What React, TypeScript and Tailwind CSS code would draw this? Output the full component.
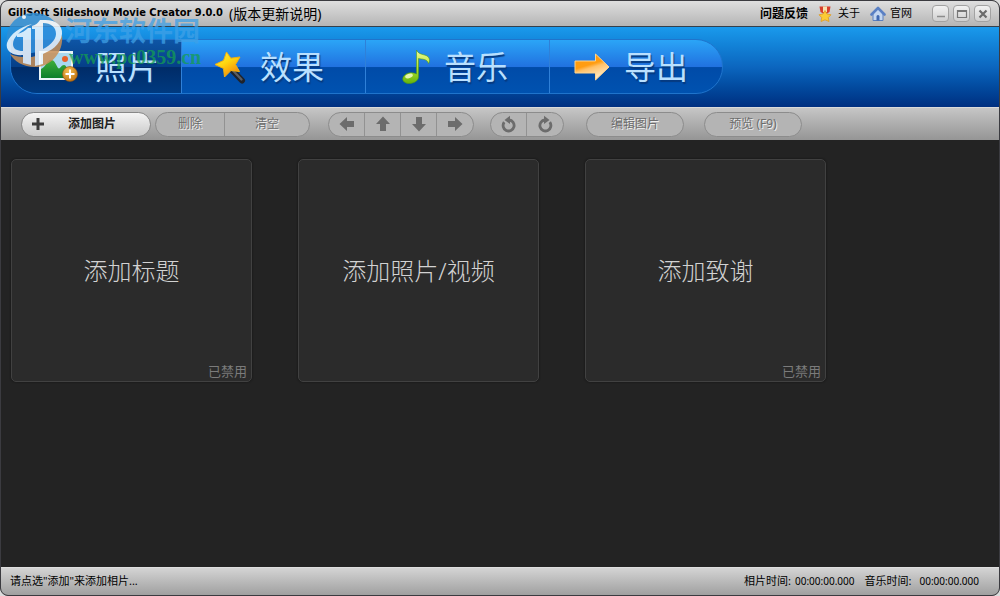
import type { ReactNode } from "react";
import { clsx } from "clsx";

const PhotoIcon = () => (
  <svg viewBox="0 0 40 32" className="h-8 w-10" aria-hidden="true">
    <defs>
      <linearGradient id="hill" x1="0" y1="0" x2="0" y2="1">
        <stop offset="0" stopColor="#3fae3c" />
        <stop offset="1" stopColor="#0b7f2c" />
      </linearGradient>
      <radialGradient id="plus" cx=".4" cy=".3" r=".8">
        <stop offset="0" stopColor="#f6c052" />
        <stop offset="1" stopColor="#b96a0c" />
      </radialGradient>
    </defs>
    <rect x="0" y="0" width="34" height="29" fill="#e9f4f8" />
    <rect x="2" y="2" width="30" height="25" fill="#a9d8f0" />
    <circle cx="26" cy="8" r="3" fill="#e8612a" />
    <path d="M2 27V18C7 16 8 9 12 9C16 9 17 14 19 17C21 19 22 14 25 14C28 14 28 20 32 21V27Z" fill="url(#hill)" />
    <circle cx="31" cy="23" r="7.5" fill="url(#plus)" stroke="#8d5312" strokeWidth=".6" />
    <path d="M31 18.5V27.5M26.500 23H35.500" stroke="#fff" strokeWidth="2" />
  </svg>
);

const WandIcon = () => (
  <svg viewBox="0 0 32 34" className="h-9 w-8" aria-hidden="true">
    <defs>
      <linearGradient id="star" x1="0" y1="0" x2=".6" y2="1">
        <stop offset="0" stopColor="#fff04a" />
        <stop offset=".5" stopColor="#ffd70f" />
        <stop offset="1" stopColor="#f58a0a" />
      </linearGradient>
    </defs>
    <path d="M18 20L28 30.500" stroke="#1f232b" strokeWidth="6" strokeLinecap="round" />
    <path d="M18.500 20L27.500 29.500" stroke="#585d64" strokeWidth="2.400" strokeLinecap="round" />
    <path d="M12.500 2L16.800 8.200L26 7L21.500 14.500L25.500 21.500L17 20.500L10.500 27L9.500 18.500L1 14.500L9.500 10.500Z" fill="url(#star)" stroke="#f0b010" strokeWidth="1" strokeLinejoin="round" />
  </svg>
);

const NoteIcon = () => (
  <svg viewBox="0 0 30 36" className="h-9 w-8" aria-hidden="true">
    <defs>
      <linearGradient id="note" x1="0" y1="0" x2="0" y2="1">
        <stop offset="0" stopColor="#f0fb9c" />
        <stop offset=".5" stopColor="#b9e532" />
        <stop offset="1" stopColor="#64b40c" />
      </linearGradient>
    </defs>
    <path d="M15.500 1C18 7 26 4.500 28 9C29 11 28.500 13 27.500 14.500C26 9.500 21 10.500 17.500 9.500V28C17.500 32 12 35 7 34.500C2.500 34 .5 30.500 2.500 27.500C5 23.500 11 22.500 15.500 25Z" fill="url(#note)" stroke="#4d9a18" strokeWidth=".6" />
    <ellipse cx="8" cy="27" rx="4" ry="2" fill="#f8ffd2" opacity=".8" transform="rotate(-20 8 27)" />
  </svg>
);

const ExportIcon = () => (
  <svg viewBox="0 0 36 28" className="h-7 w-9" aria-hidden="true">
    <defs>
      <linearGradient id="export" x1="0" y1="0" x2=".4" y2="1">
        <stop offset="0" stopColor="#ff9c0a" />
        <stop offset=".5" stopColor="#ff9d12" />
        <stop offset=".62" stopColor="#ffc168" />
        <stop offset="1" stopColor="#ffe9c4" />
      </linearGradient>
    </defs>
    <path d="M1 8H21.500V1L35 14L21.500 27V20H1Z" fill="url(#export)" stroke="#ffd48c" strokeWidth="1" />
  </svg>
);

const MedalIcon = () => (
  <svg viewBox="0 0 14 16" className="h-4 w-3.5" aria-hidden="true">
    <path d="M1.500 .5H12.500L11.500 6L8 8H6L2.500 6Z" fill="#d8402c" />
    <path d="M5 .5H9V6H5Z" fill="#f7e2b0" />
    <path d="M7 4.500L9 8L13 8.800L10.300 11.500L11 15.500L7 13.800L3 15.500L3.700 11.500L1 8.800L5 8Z" fill="#fbcb35" stroke="#e09a22" strokeWidth=".8" strokeLinejoin="round" />
  </svg>
);

const HomeIcon = () => (
  <svg viewBox="0 0 16 16" className="size-4" aria-hidden="true">
    <path d="M3 7.500L8 3L13 7.500V14.500H3Z" fill="#c3d6f0" stroke="#5c80be" />
    <path d="M6.500 14.500V10Q8 8 9.500 10V14.500Z" fill="#3f68b2" />
    <path d="M1.500 8.500L8 2L14.500 8.500" fill="none" stroke="#5a80c4" strokeWidth="2.600" strokeLinecap="round" strokeLinejoin="round" />
  </svg>
);

const ArrowIcon = ({ className }: { className?: string }) => (
  <svg viewBox="0 0 16 16" className={clsx("size-4", className)} aria-hidden="true">
    <path d="M.5 8L8 1V5H15V11H8V15Z" fill="currentColor" />
  </svg>
);

const RotateIcon = ({ className }: { className?: string }) => (
  <svg viewBox="0 0 16 18" className={clsx("h-4.5 w-4", className)} aria-hidden="true">
    <path d="M3.200 7.200A5.500 5.500 0 1 0 8 5" fill="none" stroke="currentColor" strokeWidth="2.800" />
    <path d="M9 .8V9L3.500 5Z" fill="currentColor" />
  </svg>
);

const PlusIcon = () => (
  <svg viewBox="0 0 12 12" className="size-3" aria-hidden="true">
    <path d="M6 0V12M0 6H12" stroke="#3c3c3c" strokeWidth="3" />
  </svg>
);

const tabs = [
  { id: "photo", label: "照片", icon: PhotoIcon, className: "w-[171px] gap-4 pl-7" },
  { id: "effect", label: "效果", icon: WandIcon, className: "w-[184px] gap-3.5 pl-8" },
  { id: "music", label: "音乐", icon: NoteIcon, className: "w-[184px] gap-3 pl-[34px]" },
  { id: "export", label: "导出", icon: ExportIcon, className: "w-[172px] gap-3.5 pl-6" },
];

const slots = [
  { label: "添加标题", disabled: true },
  { label: "添加照片/视频", disabled: false },
  { label: "添加致谢", disabled: true },
];

const windowButtons = [
  { label: "最小化", path: "M2 8.500H10", stroke: "#8c8c8c", width: 1.5 },
  { label: "最大化", path: "M1.500 2.500H10.500V9.500H1.500ZM1.500 3.500H10.500", stroke: "#777", width: 1.2 },
  { label: "关闭", path: "M2.500 2.500L9.500 9.500M9.500 2.500L2.500 9.500", stroke: "#6b6b6b", width: 2.2 },
];

const ToolGroup = ({ children, className }: { children: ReactNode; className?: string }) => (
  <div
    className={clsx(
      "flex h-[25px] divide-x divide-[#929292] overflow-hidden rounded-full border border-[#8c8c8c] bg-[#b4b4b4]",
      className
    )}
  >
    {children}
  </div>
);

interface ToolButtonProps {
  children: ReactNode;
  className: string;
  label?: string;
}

const ToolButton = ({ children, className, label }: ToolButtonProps) => (
  <button
    type="button"
    aria-label={label}
    className={clsx(
      "flex items-center justify-center text-[12px] text-[#6c6c6c] [text-shadow:1px_1px_0_#f0f0f0]",
      className
    )}
  >
    {children}
  </button>
);

const TitleBar = () => (
  <header className="flex h-[26px] shrink-0 items-center justify-between border-b border-[#34404c] bg-linear-to-b from-[#dfdfdf] to-[#b5b5b5] pr-2 pl-[7px]">
    <h1 className="flex items-center gap-1.5 whitespace-nowrap text-black">
      <span className="font-['DejaVu_Sans_Condensed','DejaVu_Sans',sans-serif] text-[11px] font-bold">
        GiliSoft Slideshow Movie Creator 9.0.0
      </span>
      <a href="#" className="text-[14px] font-normal">(版本更新说明)</a>
    </h1>
    <div className="flex items-center text-[11px] text-black">
      <a href="#" className="mr-2.5 text-[12px] font-bold">问题反馈</a>
      <a href="#" className="mr-2.5 flex items-center gap-1.5">
        <MedalIcon />
        关于
      </a>
      <a href="#" className="mr-5 flex items-center gap-1">
        <HomeIcon />
        官网
      </a>
      <div className="flex gap-1">
        {windowButtons.map((b) => (
          <button
            key={b.label}
            type="button"
            aria-label={b.label}
            className="flex size-[17px] items-center justify-center rounded-[4px] border border-[#a2a2a2] bg-linear-to-b from-[#f2f2f2] to-[#cfcfcf]"
          >
            <svg viewBox="0 0 12 12" className="size-3" aria-hidden="true">
              <path d={b.path} fill="none" stroke={b.stroke} strokeWidth={b.width} />
            </svg>
          </button>
        ))}
      </div>
    </div>
  </header>
);

const TabBar = () => (
  <div className="flex h-20 shrink-0 items-start bg-linear-to-b from-[#1a9aec] via-[#0c66bf] to-[#002f80] px-[9px] pt-3">
    <nav className="flex h-[55px] divide-x divide-[#2f80d8] overflow-hidden rounded-r-[27px] rounded-bl-[27px] border border-[#1f74cc] bg-[linear-gradient(#2ba5f7_0%,#2172e0_50%,#004ba8_52%,#0052b0_100%)]">
      {tabs.map((tab) => (
        <button
          key={tab.id}
          type="button"
          className={clsx(
            "flex items-center text-[32px] whitespace-nowrap text-[#b9e0ff] [text-shadow:1px_2px_1px_#063a80]",
            tab.className,
            tab.id === "photo" && "bg-[linear-gradient(#0e55a5_0%,#053f88_50%,#002c68_52%,#003a80_100%)]"
          )}
        >
          <tab.icon />
          {tab.label}
        </button>
      ))}
    </nav>
  </div>
);

const Toolbar = () => (
  <div className="flex h-[33px] shrink-0 items-center border-t border-[#dadada] bg-linear-to-b from-[#c6c6c6] to-[#959595] pl-5">
    <button
      type="button"
      className="flex h-[25px] w-[130px] items-center gap-6 rounded-full border border-[#888] bg-linear-to-b from-[#f4f4f4] to-[#cacaca] pl-2.5 text-[12px] font-bold text-[#222]"
    >
      <PlusIcon />
      添加图片
    </button>
    <ToolGroup className="ml-1">
      <ToolButton className="w-[69px]">删除</ToolButton>
      <ToolButton className="w-[84px]">清空</ToolButton>
    </ToolGroup>
    <ToolGroup className="ml-[18px]">
      <ToolButton label="左移" className="w-[36px]"><ArrowIcon /></ToolButton>
      <ToolButton label="上移" className="w-[36px]"><ArrowIcon className="rotate-90" /></ToolButton>
      <ToolButton label="下移" className="w-[36px]"><ArrowIcon className="-rotate-90" /></ToolButton>
      <ToolButton label="右移" className="w-[36px]"><ArrowIcon className="rotate-180" /></ToolButton>
    </ToolGroup>
    <ToolGroup className="ml-4">
      <ToolButton label="向左旋转" className="w-[36px]"><RotateIcon /></ToolButton>
      <ToolButton label="向右旋转" className="w-[36px]"><RotateIcon className="-scale-x-100" /></ToolButton>
    </ToolGroup>
    <ToolGroup className="ml-[22px]">
      <ToolButton className="w-24">编辑图片</ToolButton>
    </ToolGroup>
    <ToolGroup className="ml-5">
      <ToolButton className="w-24">预览 (F9)</ToolButton>
    </ToolGroup>
  </div>
);

const Watermark = () => (
  <div className="pointer-events-none absolute top-2 left-1 flex">
    <svg viewBox="0 0 60 60" className="size-15 opacity-85" aria-hidden="true">
      <path d="M2 36C-1 17 12 4 29 4C43 4 54 13 56 26C48 16 34 13 22 19C11 24 5 30 2 36Z" fill="#2e8fd6" />
      <path d="M57 26C59 43 46 58 30 58C18 58 9 52 5 45C25 53 46 46 57 26Z" fill="#c98f55" />
      <path d="M4 40C7 27 20 16 34 15C46 15 53 19 52 26C50 37 35 44 20 45C10 45 5 43 4 40Z" fill="#3390dc" />
      <path d="M2 34C5 25 15 18 27 15C14 22 8 29 8 35C8 40 12 42 18 42V46C8 47 0 42 2 34Z" fill="#f4faff" />
      <path d="M38 11C50 10 58 16 57 25C56 35 46 43 34 46V42C44 38 51 31 51 25C51 18 46 14 38 14Z" fill="#f4faff" />
      <path d="M12 25C17 24 20 22 23 19H26V56L18 54V28H12Z" fill="#f4faff" />
      <path d="M27 17C31 16 33 14 35 11H38V55L30 57V20H27Z" fill="#f4faff" />
      <circle cx="19" cy="8" r="2" fill="#f4faff" />
    </svg>
    <div className="flex flex-col whitespace-nowrap pt-2">
      <span className="text-[27px] leading-7 font-bold text-[#3fa0e6]/75">河东软件园</span>
      <span className="pl-1 font-['Liberation_Serif',serif] text-[20px] leading-6 font-bold text-[#149d52]/75">
        www.pc0359.cn
      </span>
    </div>
  </div>
);

const App = () => {
  return (
    <div className="bg-[#dcdcdc] font-['Noto_Sans','Noto_Sans_CJK_SC',sans-serif]">
      <div className="relative flex min-h-screen flex-col overflow-hidden rounded-lg border border-[#3b3b40] bg-[#232323]">
        <TitleBar />
        <TabBar />
        <Toolbar />
        <main className="flex flex-1 flex-wrap content-start gap-[46px] px-2.5 pt-[19px] pb-5">
          {slots.map((slot) => (
            <button
              key={slot.label}
              type="button"
              className="relative flex h-[223px] w-[241px] items-center justify-center rounded-[5px] border border-[#414141] bg-[#2b2b2b] text-[24px] font-light text-[#d2d2d2] shadow-[0_0_2px_#111]"
            >
              {slot.label}
              {slot.disabled && (
                <span className="absolute right-1 bottom-0 text-[13px] font-normal text-[#7b7b7b]">已禁用</span>
              )}
            </button>
          ))}
        </main>
        <footer className="flex h-7 shrink-0 items-center justify-between border-t border-[#dedede] bg-linear-to-b from-[#d4d4d4] to-[#a0a0a0] pr-5 pl-[9px] text-[11px] text-black">
          <p>请点选"添加"来添加相片...</p>
          <div className="flex items-center gap-2.5">
            <p className="flex items-center gap-1">
              相片时间: <time className="text-[10px]">00:00:00.000</time>
            </p>
            <p className="flex items-center gap-2">
              音乐时间: <time className="text-[10px]">00:00:00.000</time>
            </p>
          </div>
        </footer>
        <Watermark />
      </div>
    </div>
  );
};

export default App;
